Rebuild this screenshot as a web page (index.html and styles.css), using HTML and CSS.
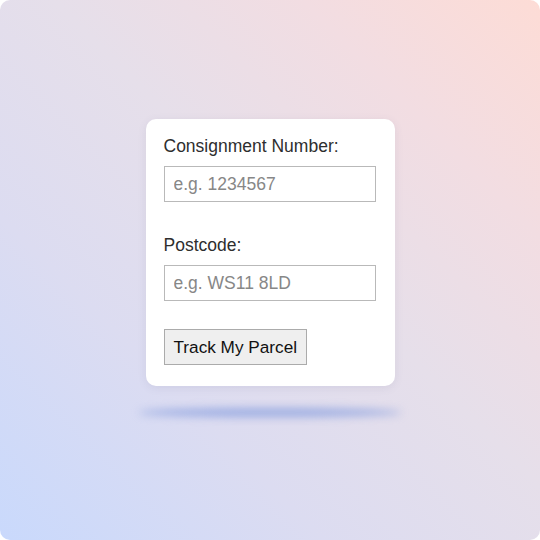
FILE: index.html
```html
<!DOCTYPE html>
<html lang="en">
<head>
<meta charset="utf-8">
<title>Track My Parcel</title>
<link rel="stylesheet" href="styles.css">
</head>
<body>
<div class="canvas">
  <form class="card">
    <label class="label" for="consignment">Consignment Number:</label>
    <input class="field" id="consignment" type="text" placeholder="e.g. 1234567">
    <label class="label label-second" for="postcode">Postcode:</label>
    <input class="field" id="postcode" type="text" placeholder="e.g. WS11 8LD">
    <div class="actions">
      <button class="btn" type="button">Track My Parcel</button>
    </div>
  </form>
  <div class="floor-shadow"></div>
</div>
</body>
</html>
```
FILE: styles.css
```css
html, body {
  margin: 0;
  padding: 0;
  background: #ffffff;
}
.canvas {
  width: 540px;
  height: 540px;
  box-sizing: border-box;
  border-radius: 10px;
  overflow: hidden;
  background: linear-gradient(45deg, #c9d9fc 0%, #dcdcf1 30%, #e6dfea 55%, #f2dde2 78%, #fddcd6 100%);
  display: flex;
  flex-direction: column;
  align-items: center;
  padding-top: 119px;
  font-family: "Liberation Sans", Arial, Helvetica, sans-serif;
}
.card {
  width: 249px;
  box-sizing: border-box;
  background: #ffffff;
  border-radius: 10px;
  padding: 18px 19px 21px 18px;
  box-shadow: 0 2px 8px rgba(90, 90, 130, 0.10);
  display: flex;
  flex-direction: column;
  margin: 0;
}
.label {
  font-size: 17.5px;
  line-height: 18px;
  color: #2e2e2e;
  margin-bottom: 11px;
}
.label-second {
  margin-top: 34px;
  margin-bottom: 11px;
}
.field {
  width: 212px;
  height: 36px;
  box-sizing: border-box;
  border: 1px solid #b9b9b9;
  border-radius: 0;
  padding: 0 9px;
  margin: 0;
  font-family: "Liberation Sans", Arial, Helvetica, sans-serif;
  font-size: 17.5px;
  color: #333333;
  background: #ffffff;
  outline: none;
}
.field::placeholder {
  color: #878787;
}
.actions {
  display: flex;
  margin-top: 28px;
}
.btn {
  height: 36px;
  box-sizing: border-box;
  padding: 0 9px;
  margin: 0;
  border: 1px solid #ababab;
  border-radius: 0;
  background: #efefef;
  color: #111111;
  font-family: "Liberation Sans", Arial, Helvetica, sans-serif;
  font-size: 17.2px;
}
.floor-shadow {
  width: 262px;
  height: 9px;
  margin-top: 22px;
  border-radius: 50%;
  background: rgba(135, 158, 222, 0.75);
  filter: blur(4px);
}
```
